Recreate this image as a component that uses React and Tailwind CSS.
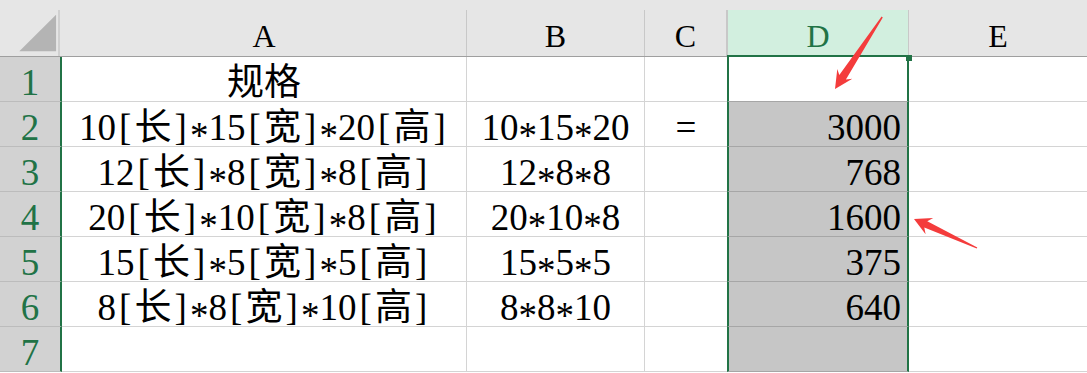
import React from 'react';

const rows = [
  { spec: '规格', calc: '', eq: '', val: '' },
  { spec: '10[长]*15[宽]*20[高]', calc: '10*15*20', eq: '=', val: '3000' },
  { spec: '12[长]*8[宽]*8[高]', calc: '12*8*8', eq: '', val: '768' },
  { spec: '20[长]*10[宽]*8[高]', calc: '20*10*8', eq: '', val: '1600' },
  { spec: '15[长]*5[宽]*5[高]', calc: '15*5*5', eq: '', val: '375' },
  { spec: '8[长]*8[宽]*10[高]', calc: '8*8*10', eq: '', val: '640' },
  { spec: '', calc: '', eq: '', val: '' },
];

// SimSun-like text: brackets and asterisk take half an em
function Sheet({ text }) {
  return (
    <span className="whitespace-nowrap">
      {text.split('').map((ch, i) => {
        if (ch === '[' || ch === ']')
          return <span key={i} className="inline-block w-[0.5em] text-center">{ch}</span>;
        if (ch === '*')
          return <span key={i} className="inline-block w-[0.5em] text-center translate-y-[8px]">*</span>;
        return <span key={i}>{ch}</span>;
      })}
    </span>
  );
}

export default function App() {
  return (
    <div className="relative w-[1087px] h-[373px] overflow-hidden bg-white font-['Liberation_Serif','Noto_Sans_CJK_SC',serif] text-black">
      {/* column headers */}
      <div className="flex h-[57px] bg-[#e6e6e6]">
        <div className="w-[62px] h-full flex items-start border-b border-[#9f9f9f]">
          <div className="mt-[10px] w-[60px] h-[46px] border-r-2 border-[#d0d0d0] flex items-end">
            <svg width="60" height="46" viewBox="0 0 60 46">
              <polygon points="20,42 58,42 58,4" fill="#b4b4b4" />
            </svg>
          </div>
        </div>
        <div className="w-[405px] h-full border-b border-[#9f9f9f] pt-[10px]">
          <div className="h-[46px] border-r border-[#c8c8c8] flex items-center justify-center text-[32px] leading-none pt-[6px]">A</div>
        </div>
        <div className="w-[178px] h-full border-b border-[#9f9f9f] pt-[10px]">
          <div className="h-[46px] border-r border-[#c8c8c8] flex items-center justify-center text-[32px] leading-none pt-[6px]">B</div>
        </div>
        <div className="w-[82px] h-full border-b border-[#9f9f9f] pt-[10px]">
          <div className="h-[46px] border-r border-[#c8c8c8] flex items-center justify-center text-[32px] leading-none pt-[6px]">C</div>
        </div>
        <div className="w-[182px] h-full border-b-2 border-[#217346] pt-[10px]">
          <div className="h-[45px] bg-[#d2efdf] border-x border-[#c8c8c8] flex items-center justify-center text-[32px] leading-none pt-[6px] text-[#217346]">D</div>
        </div>
        <div className="flex-1 h-full border-b border-[#9f9f9f] pt-[10px]">
          <div className="h-[46px] flex items-center justify-center text-[32px] leading-none pt-[6px]">E</div>
        </div>
      </div>

      {/* rows */}
      {rows.map((r, i) => (
        <div key={i} className="flex h-[45px] text-[37px]">
          <div className="w-[62px] h-full bg-[#d2d2d2] border-r-2 border-[#217346] border-b border-b-[#bcbcbc] flex items-center justify-center text-[#217346] leading-none pt-[6px]">
            {i + 1}
          </div>
          <div className="w-[405px] h-full border-b border-r border-[#d4d4d4] flex items-center justify-center leading-none pt-[6px]">
            <Sheet text={r.spec} />
          </div>
          <div className="w-[178px] h-full border-b border-r border-[#d4d4d4] flex items-center justify-center leading-none pt-[6px]">
            <Sheet text={r.calc} />
          </div>
          <div className="w-[82px] h-full border-b border-[#d4d4d4] flex items-center justify-center leading-none pt-[6px]">
            {r.eq}
          </div>
          <div
            className={`relative w-[182px] h-full border-x-2 border-x-[#217346] border-b border-b-[#a6a6a6] flex items-center justify-end pr-[6px] leading-none pt-[6px] ${
              i === 0 ? 'bg-white' : 'bg-[#c6c6c6]'
            }`}
          >
            {r.val}
            {i === 0 && <span className="absolute -right-[5px] -top-[2px] w-[6px] h-[6px] bg-[#217346]" />}
          </div>
          <div className="flex-1 h-full border-b border-[#d4d4d4]" />
        </div>
      ))}

      {/* annotation arrows */}
      <svg className="absolute inset-0 pointer-events-none" width="1087" height="373" viewBox="0 0 1087 373">
        <polygon
          points="882.8,17.5 845.9,79.5 852.3,78.8 835,89 837.3,69 839.3,75.1 881.6,16.5"
          fill="#f43c3c"
        />
        <polygon
          points="977.3,247.4 927.3,221.2 933.2,217.9 914,219 925.6,234.3 924.3,227.6 976.7,248.6"
          fill="#f43c3c"
        />
      </svg>
    </div>
  );
}
